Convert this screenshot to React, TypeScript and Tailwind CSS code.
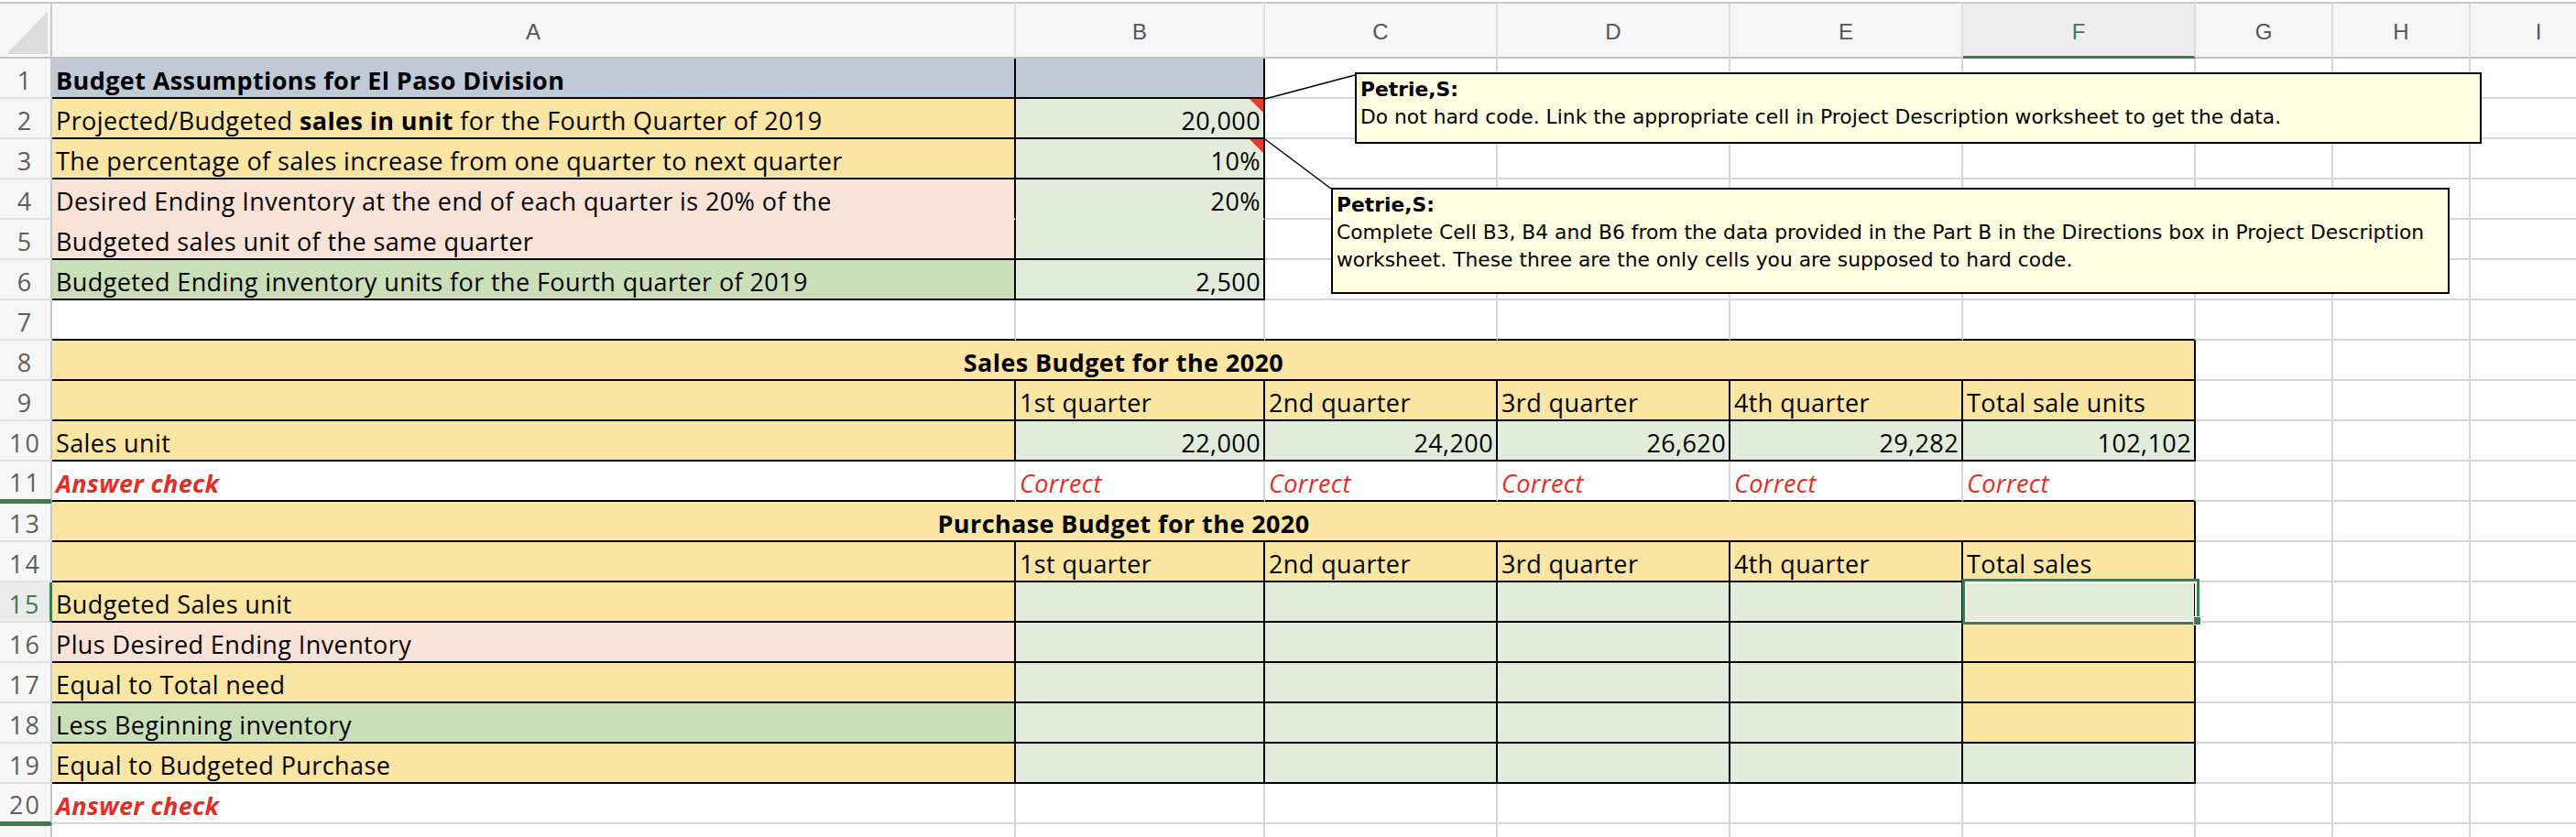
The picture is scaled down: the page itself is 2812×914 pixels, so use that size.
import React from 'react';

type Bg = 'w' | 'blue' | 'yel' | 'pink' | 'grn' | 'lg';
type Edge = 'k' | 'g' | 'n';

interface Cell {
  t?: React.ReactNode;
  bg?: Bg;
  al?: 'l' | 'r' | 'c';
  fx?: 'b' | 'red' | 'redb';
  r?: Edge;
  b?: Edge;
  span?: boolean;
  tri?: boolean;
  sel?: boolean;
}

interface RowDef {
  n: number;
  hs?: 'sel' | 'gapBelow' | 'gapAbove';
  cells: Cell[];
}

const bgCls: Record<Bg, string> = {
  w: 'bg-white',
  blue: 'bg-[#c0c9d6]',
  yel: 'bg-[#fae5a2]',
  pink: 'bg-[#f9e3d7]',
  grn: 'bg-[#cadfb8]',
  lg: 'bg-[#e3ecda]',
};
const rCls: Record<Edge, string> = {
  k: 'border-r-black',
  g: 'border-r-[#d6d6d6]',
  n: 'border-r-transparent',
};
const bCls: Record<Edge, string> = {
  k: 'border-b-black',
  g: 'border-b-[#d6d6d6]',
  n: 'border-b-transparent',
};
const alCls = { l: 'justify-start', r: 'justify-end', c: 'justify-center' };
const fxCls = {
  b: 'font-bold text-black',
  red: 'italic text-[#e52d27]',
  redb: 'italic font-bold text-[#e52d27]',
};

const blank = (n: number): Cell[] => Array.from({ length: n }, () => ({}));
const boxed = (c: Cell): Cell => ({ r: 'k', b: 'k', ...c });

const quarters = (last: string): Cell[] =>
  ['1st quarter', '2nd quarter', '3rd quarter', '4th quarter', last].map((t) => boxed({ t, bg: 'yel' }));

const rows: RowDef[] = [
  {
    n: 1,
    cells: [boxed({ t: 'Budget Assumptions for El Paso Division', bg: 'blue', fx: 'b' }), boxed({ bg: 'blue' }), ...blank(7)],
  },
  {
    n: 2,
    cells: [
      boxed({
        t: (
          <>
            Projected/Budgeted <b>sales in unit</b> for the Fourth Quarter of 2019
          </>
        ),
        bg: 'yel',
      }),
      boxed({ t: '20,000', al: 'r', bg: 'lg', tri: true }),
      ...blank(7),
    ],
  },
  {
    n: 3,
    cells: [
      boxed({ t: 'The percentage of sales increase from one quarter to next quarter', bg: 'yel' }),
      boxed({ t: '10%', al: 'r', bg: 'lg', tri: true }),
      ...blank(7),
    ],
  },
  {
    n: 4,
    cells: [
      { t: 'Desired Ending Inventory at the end of each quarter is 20% of the', bg: 'pink', r: 'k', b: 'n' },
      { t: '20%', al: 'r', bg: 'lg', r: 'k', b: 'n' },
      ...blank(7),
    ],
  },
  {
    n: 5,
    cells: [boxed({ t: 'Budgeted sales unit of the same quarter', bg: 'pink' }), boxed({ bg: 'lg' }), ...blank(7)],
  },
  {
    n: 6,
    cells: [
      boxed({ t: 'Budgeted Ending inventory units for the Fourth quarter of 2019', bg: 'grn' }),
      boxed({ t: '2,500', al: 'r', bg: 'lg' }),
      ...blank(7),
    ],
  },
  { n: 7, cells: [...Array.from({ length: 6 }, () => ({ b: 'k' as Edge })), ...blank(3)] },
  { n: 8, cells: [boxed({ t: 'Sales Budget for the 2020', bg: 'yel', fx: 'b', al: 'c', span: true }), ...blank(3)] },
  { n: 9, cells: [boxed({ bg: 'yel' }), ...quarters('Total sale units'), ...blank(3)] },
  {
    n: 10,
    cells: [
      boxed({ t: 'Sales unit', bg: 'yel' }),
      ...['22,000', '24,200', '26,620', '29,282', '102,102'].map((t) => boxed({ t, al: 'r', bg: 'lg' })),
      ...blank(3),
    ],
  },
  {
    n: 11,
    hs: 'gapBelow',
    cells: [
      { t: 'Answer check', fx: 'redb', b: 'k' },
      ...Array.from({ length: 5 }, () => ({ t: 'Correct', fx: 'red' as const, b: 'k' as Edge })),
      ...blank(3),
    ],
  },
  { n: 13, hs: 'gapAbove', cells: [boxed({ t: 'Purchase Budget for the 2020', bg: 'yel', fx: 'b', al: 'c', span: true }), ...blank(3)] },
  { n: 14, cells: [boxed({ bg: 'yel' }), ...quarters('Total sales'), ...blank(3)] },
  {
    n: 15,
    hs: 'sel',
    cells: [
      boxed({ t: 'Budgeted Sales unit', bg: 'yel' }),
      ...Array.from({ length: 4 }, () => boxed({ bg: 'lg' })),
      boxed({ bg: 'lg', sel: true }),
      ...blank(3),
    ],
  },
  {
    n: 16,
    cells: [
      boxed({ t: 'Plus Desired Ending Inventory', bg: 'pink' }),
      ...Array.from({ length: 4 }, () => boxed({ bg: 'lg' })),
      boxed({ bg: 'yel' }),
      ...blank(3),
    ],
  },
  {
    n: 17,
    cells: [
      boxed({ t: 'Equal to Total need', bg: 'yel' }),
      ...Array.from({ length: 4 }, () => boxed({ bg: 'lg' })),
      boxed({ bg: 'yel' }),
      ...blank(3),
    ],
  },
  {
    n: 18,
    cells: [
      boxed({ t: 'Less Beginning inventory', bg: 'grn' }),
      ...Array.from({ length: 4 }, () => boxed({ bg: 'lg' })),
      boxed({ bg: 'yel' }),
      ...blank(3),
    ],
  },
  {
    n: 19,
    cells: [
      boxed({ t: 'Equal to Budgeted Purchase', bg: 'yel' }),
      ...Array.from({ length: 5 }, () => boxed({ bg: 'lg' })),
      ...blank(3),
    ],
  },
  { n: 20, hs: 'gapBelow', cells: [{ t: 'Answer check', fx: 'redb' }, ...blank(8)] },
  { n: 22, hs: 'gapAbove', cells: blank(9) },
];

const rowHeadCls = {
  base: 'flex items-end justify-center pb-[5px] bg-[#f6f6f6] border-b-2 border-b-[#e1e1e1] border-r-2 border-r-[#c8c8c8] text-[#5e5e5e]',
  sel: 'flex items-end justify-center pb-[5px] bg-[#ebebeb] border-b-2 border-b-[#e1e1e1] border-r-[3px] border-r-[#3e7b51] text-[#3e7b51]',
  gapBelow: 'flex items-end justify-center pb-[5px] bg-[#f6f6f6] border-b-[3px] border-b-[#3e7b51] border-r-2 border-r-[#c8c8c8] text-[#5e5e5e]',
  gapAbove: 'flex items-end justify-center pb-[5px] bg-[#f6f6f6] border-t-2 border-t-[#3e7b51] border-b-2 border-b-[#e1e1e1] border-r-2 border-r-[#c8c8c8] text-[#5e5e5e]',
};

const letters = ['A', 'B', 'C', 'D', 'E', 'F', 'G', 'H', 'I'];

const CommentNote = ({ className, lines }: { className: string; lines: string[] }) => (
  <div
    className={`absolute z-20 border-2 border-black bg-[#ffffe1] pl-[4px] pt-[2px] font-['DejaVu_Sans',Verdana,sans-serif] text-[21.8px] leading-[30px] tracking-normal text-black whitespace-nowrap ${className}`}
  >
    <div className="font-bold">Petrie,S:</div>
    {lines.map((l) => (
      <div key={l}>{l}</div>
    ))}
  </div>
);

const SheetCell = ({ c }: { c: Cell }) => (
  <div
    className={`relative flex items-end whitespace-nowrap border-r-2 border-b-2 pb-[5px] pl-[4px] pr-[3px] ${c.span ? 'col-span-6' : ''} ${
      bgCls[c.bg ?? 'w']
    } ${rCls[c.r ?? 'g']} ${bCls[c.b ?? 'g']} ${alCls[c.al ?? 'l']} ${c.fx ? fxCls[c.fx] : 'text-black'}`}
  >
    <span>{c.t}</span>
    {c.tri && (
      <svg className="absolute right-0 top-0 z-10" width="15" height="15" viewBox="0 0 15 15">
        <polygon points="0,0 15,0 15,15" fill="#e53b2c" />
      </svg>
    )}
    {c.sel && (
      <>
        <div className="absolute -top-[4px] -left-[1px] -right-[6px] -bottom-[4px] z-10 border-[3px] border-[#3e7b51] shadow-[inset_0_0_0_2px_white]" />
        <div className="absolute -right-[8px] -bottom-[5px] z-10 h-[10px] w-[9px] border border-white bg-[#3e7b51]" />
      </>
    )}
  </div>
);

export default function App() {
  return (
    <div className="relative h-[914px] w-[2812px] overflow-hidden bg-white font-['Open_Sans',sans-serif] text-[27px] leading-none tracking-[0.4px]">
      <div className="grid grid-cols-[57px_1052px_272px_254px_254px_254px_254px_150px_150px_150px] grid-rows-[64px_repeat(20,44px)]">
        <div className="mt-[2px] border-t-2 border-t-[#c9c9c9] border-r-2 border-r-[#c8c8c8] border-b-2 border-b-[#c4c4c4] bg-[#f6f6f6]">
          <svg width="55" height="58" viewBox="0 0 55 58">
            <polygon points="52,9 52,55 7,55" fill="#dcdcdc" />
          </svg>
        </div>
        {letters.map((l) =>
          l === 'F' ? (
            <div
              key={l}
              className="mt-[2px] flex items-end justify-center border-t-2 border-t-[#c9c9c9] border-r-2 border-r-[#dedede] border-b-[3px] border-b-[#3e7b51] bg-[#ededed] pb-[14px] font-['Liberation_Sans',Arial,sans-serif] text-[24px] tracking-normal text-[#3e7b51]"
            >
              {l}
            </div>
          ) : (
            <div
              key={l}
              className="mt-[2px] flex items-end justify-center border-t-2 border-t-[#c9c9c9] border-r-2 border-r-[#dedede] border-b-2 border-b-[#c4c4c4] bg-[#f6f6f6] pb-[15px] font-['Liberation_Sans',Arial,sans-serif] text-[24px] tracking-normal text-[#555555]"
            >
              {l}
            </div>
          )
        )}
        {rows.map((row) => (
          <React.Fragment key={row.n}>
            <div className={`${rowHeadCls[row.hs ?? 'base']} tracking-[2px]`}>{row.n}</div>
            {row.cells.map((c, i) => (
              <SheetCell key={i} c={c} />
            ))}
          </React.Fragment>
        ))}
      </div>

      <svg className="pointer-events-none absolute inset-0 z-20" width="2812" height="914">
        <line x1="1381" y1="108" x2="1479" y2="82" stroke="black" strokeWidth="1.5" />
        <line x1="1381" y1="152" x2="1453" y2="206" stroke="black" strokeWidth="1.5" />
      </svg>

      <CommentNote
        className="left-[1479px] top-[79px] h-[78px] w-[1230px]"
        lines={['Do not hard code. Link the appropriate cell in Project Description worksheet to get the data.']}
      />
      <CommentNote
        className="left-[1453px] top-[205px] h-[116px] w-[1221px]"
        lines={[
          'Complete Cell B3, B4 and B6 from the data provided in the Part B in the Directions box in Project Description',
          'worksheet. These three are the only cells you are supposed to hard code.',
        ]}
      />
    </div>
  );
}
